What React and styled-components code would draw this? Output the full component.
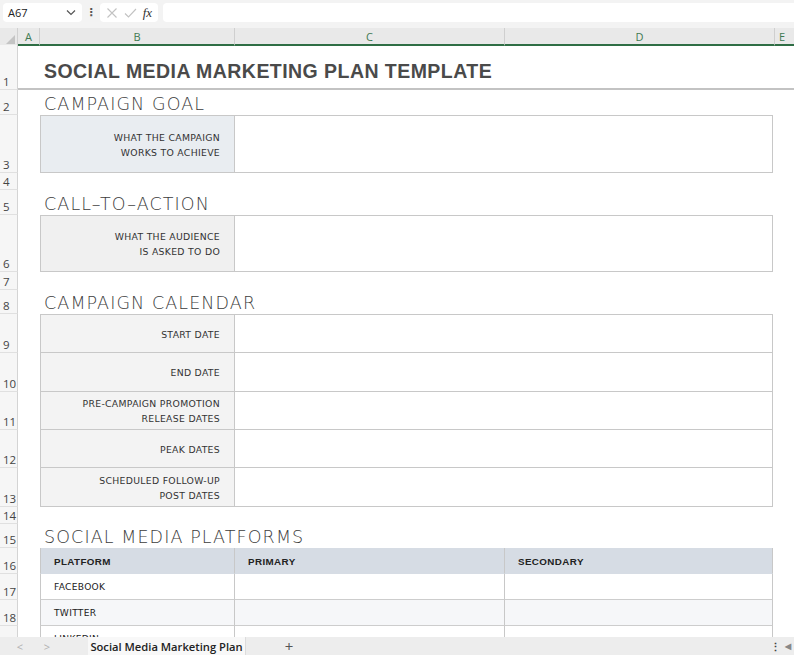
import React from "react";
import styled, { createGlobalStyle } from "styled-components";

const COLS = "18px 22px 195px 270px 270px 1fr";

const GlobalStyle = createGlobalStyle`
  html, body {
    margin: 0;
    padding: 0;
    background: #fff;
  }
  body {
    font-family: "DejaVu Sans", sans-serif;
  }
`;

const Window = styled.div`
  width: 794px;
  height: 655px;
  display: flex;
  flex-direction: column;
  overflow: hidden;
  background: #fff;
`;

const TopBar = styled.div`
  height: 28px;
  flex-shrink: 0;
  background: #f3f3f3;
  display: flex;
  align-items: flex-start;
  padding-top: 3px;
  box-sizing: border-box;
`;

const NameBox = styled.div`
  margin-left: 3px;
  width: 79px;
  height: 19px;
  background: #fff;
  border-radius: 4px;
  display: flex;
  align-items: center;
  justify-content: space-between;
  padding: 0 6px 0 5px;
  box-sizing: border-box;
  font-family: "Open Sans", sans-serif;
  font-size: 11px;
  color: #222;
`;

const Dots = styled.div`
  width: 18px;
  text-align: center;
  font-family: "DejaVu Sans", sans-serif;
  font-size: 11px;
  font-weight: bold;
  color: #555;
  line-height: 19px;
`;

const FxBox = styled.div`
  width: 58px;
  height: 19px;
  background: #fff;
  border-radius: 4px;
  display: flex;
  align-items: center;
  justify-content: space-around;
  padding: 0 3px;
  box-sizing: border-box;
`;

const Fx = styled.span`
  font-family: "Liberation Serif", serif;
  font-style: italic;
  font-size: 13px;
  color: #333;
`;

const Formula = styled.div`
  margin-left: 5px;
  flex: 1;
  height: 19px;
  background: #fff;
  border-radius: 4px 0 0 4px;
`;

const ColHeader = styled.div`
  height: 17px;
  flex-shrink: 0;
  display: grid;
  grid-template-columns: ${COLS};
  background: #e9e9e9;
`;

const Corner = styled.div`
  border-right: 1px solid #d0d0d0;
  position: relative;
  &::after {
    content: "";
    position: absolute;
    right: 2px;
    bottom: 2px;
    border-left: 9px solid transparent;
    border-bottom: 9px solid #c4c4c4;
  }
`;

const ColLetter = styled.div`
  border-right: 1px solid #cfcfcf;
  border-bottom: 2px solid #2f6e45;
  font-family: "Open Sans", sans-serif;
  font-size: 11px;
  color: #3f7a52;
  display: flex;
  align-items: center;
  justify-content: center;
  padding-top: 1px;
  box-sizing: border-box;
  &:last-child {
    border-right: none;
    justify-content: flex-start;
    padding-left: 4px;
  }
`;

const Sheet = styled.div`
  flex: 1;
  overflow: hidden;
  display: flex;
  flex-direction: column;
`;

const Row = styled.div`
  height: ${(p) => p.$h}px;
  flex-shrink: 0;
  display: grid;
  grid-template-columns: ${COLS};
`;

const RowNum = styled.div`
  grid-column: 1;
  background: #f6f6f6;
  border-right: 1px solid #d4d4d4;
  border-bottom: 1px solid #e0e0e0;
  font-family: "Open Sans", sans-serif;
  font-size: 11.5px;
  color: #444;
  display: flex;
  align-items: flex-end;
  padding: 0 0 1px 3px;
  box-sizing: border-box;
  line-height: 13px;
`;

const Title = styled.div`
  grid-column: 2 / -1;
  border-bottom: 2px solid #c3c3c3;
  display: flex;
  align-items: center;
  padding: 10px 0 0 26px;
  box-sizing: border-box;
  font-family: "Liberation Sans", sans-serif;
  font-weight: bold;
  font-size: 19.5px;
  letter-spacing: 0.45px;
  color: #4a4a4a;
`;

const Heading = styled.div`
  grid-column: 3 / -1;
  display: flex;
  align-items: flex-end;
  padding: 0 0 1px 4px;
  font-family: "DejaVu Sans", sans-serif;
  font-weight: 200;
  font-size: 17.5px;
  letter-spacing: 1.1px;
  color: #3c3c3c;
  line-height: 19px;
`;

const Label = styled.div`
  grid-column: 3;
  background: ${(p) => p.$bg || "#f2f2f2"};
  border: 1px solid #c8c8c8;
  border-top: ${(p) => (p.$first ? "1px solid #c8c8c8" : "none")};
  display: flex;
  align-items: center;
  justify-content: flex-end;
  text-align: right;
  padding: 1px 14px 0 0;
  box-sizing: border-box;
  font-family: "DejaVu Sans", sans-serif;
  font-size: 9.3px;
  letter-spacing: 0.3px;
  line-height: 15px;
  color: #333;
`;

const Value = styled.div`
  grid-column: 4 / 6;
  margin-right: 2px;
  border-right: 1px solid #c8c8c8;
  border-bottom: 1px solid #c8c8c8;
  border-top: ${(p) => (p.$first ? "1px solid #c8c8c8" : "none")};
  background: #fff;
`;

const PCell = styled.div`
  grid-column: ${(p) => p.$col};
  background: ${(p) => (p.$head ? "#d6dce4" : p.$alt ? "#f6f7f9" : "#fff")};
  border-right: 1px solid #c8c8c8;
  border-left: ${(p) => (p.$col === 3 ? "1px solid #c8c8c8" : "none")};
  border-bottom: 1px solid ${(p) => (p.$head ? "#d6dce4" : "#cdcdcd")};
  margin-right: ${(p) => (p.$col === 5 ? "2px" : "0")};
  display: flex;
  align-items: center;
  padding: 1px 0 0 13px;
  box-sizing: border-box;
  font-family: ${(p) => (p.$head ? '"Liberation Sans", sans-serif' : '"DejaVu Sans", sans-serif')};
  font-weight: ${(p) => (p.$head ? "bold" : "normal")};
  font-size: ${(p) => (p.$head ? "9.8px" : "9.1px")};
  letter-spacing: ${(p) => (p.$head ? "0.4px" : "0.3px")};
  color: #222;
`;

const TabBar = styled.div`
  height: 18px;
  flex-shrink: 0;
  background: #ededed;
  display: flex;
  align-items: stretch;
  font-family: "Open Sans", sans-serif;
  line-height: 1;
`;

const Arrow = styled.div`
  width: ${(p) => p.$w}px;
  display: flex;
  align-items: center;
  justify-content: center;
  color: #b0b0b0;
  font-size: 11px;
`;

const Tab = styled.div`
  width: 158px;
  margin-left: ${(p) => p.$ml}px;
  background: #f8f8f8;
  border-right: 1px solid #dcdcdc;
  display: flex;
  align-items: center;
  justify-content: center;
  font-size: 11.2px;
  font-weight: 600;
  color: #222;
  padding-top: 1px;
  box-sizing: border-box;
`;

const Plus = styled.div`
  width: 86px;
  display: flex;
  align-items: center;
  justify-content: center;
  font-size: 15px;
  color: #555;
`;

const Spacer = styled.div`
  flex: 1;
`;

const TailIcon = styled.div`
  width: ${(p) => p.$w}px;
  display: flex;
  align-items: center;
  justify-content: center;
  font-size: ${(p) => p.$fs}px;
  font-weight: bold;
  color: ${(p) => p.$c};
`;

const Chevron = () => (
  <svg width="10" height="7" viewBox="0 0 10 7">
    <path d="M1 1.5 L5 5.5 L9 1.5" fill="none" stroke="#555" strokeWidth="1.2" />
  </svg>
);

const Cross = () => (
  <svg width="12" height="12" viewBox="0 0 12 12">
    <path d="M1.5 1.5 L10.5 10.5 M10.5 1.5 L1.5 10.5" stroke="#c2c2c2" strokeWidth="1.1" />
  </svg>
);

const Check = () => (
  <svg width="13" height="12" viewBox="0 0 13 12">
    <path d="M1 6.5 L4.5 10 L12 2" fill="none" stroke="#c2c2c2" strokeWidth="1.1" />
  </svg>
);

const Spacer1 = ({ h, n }) => (
  <Row $h={h}>
    <RowNum>{n}</RowNum>
  </Row>
);

const calendar = [
  ["START DATE"],
  ["END DATE"],
  ["PRE-CAMPAIGN PROMOTION", "RELEASE DATES"],
  ["PEAK DATES"],
  ["SCHEDULED FOLLOW-UP", "POST DATES"],
];
const calHeights = [39, 39, 38, 38, 39];

const platforms = ["FACEBOOK", "TWITTER", "LINKEDIN"];

const Lines = ({ lines }) =>
  lines.map((l, i) => (
    <React.Fragment key={i}>
      {i > 0 && <br />}
      {l}
    </React.Fragment>
  ));

export default function App() {
  return (
    <Window>
      <GlobalStyle />
      <TopBar>
        <NameBox>
          A67
          <Chevron />
        </NameBox>
        <Dots>⋮</Dots>
        <FxBox>
          <Cross />
          <Check />
          <Fx>fx</Fx>
        </FxBox>
        <Formula />
      </TopBar>

      <ColHeader>
        <Corner />
        <ColLetter>A</ColLetter>
        <ColLetter>B</ColLetter>
        <ColLetter>C</ColLetter>
        <ColLetter>D</ColLetter>
        <ColLetter>E</ColLetter>
      </ColHeader>

      <Sheet>
        <Row $h={45}>
          <RowNum>1</RowNum>
          <Title>SOCIAL MEDIA MARKETING PLAN TEMPLATE</Title>
        </Row>

        <Row $h={25}>
          <RowNum>2</RowNum>
          <Heading>CAMPAIGN GOAL</Heading>
        </Row>
        <Row $h={58}>
          <RowNum>3</RowNum>
          <Label $first $bg="#e9edf1">
            <div>
              <Lines lines={["WHAT THE CAMPAIGN", "WORKS TO ACHIEVE"]} />
            </div>
          </Label>
          <Value $first />
        </Row>
        <Spacer1 h={17} n={4} />

        <Row $h={25}>
          <RowNum>5</RowNum>
          <Heading>CALL–TO–ACTION</Heading>
        </Row>
        <Row $h={57}>
          <RowNum>6</RowNum>
          <Label $first $bg="#f0f0f0">
            <div>
              <Lines lines={["WHAT THE AUDIENCE", "IS ASKED TO DO"]} />
            </div>
          </Label>
          <Value $first />
        </Row>
        <Spacer1 h={18} n={7} />

        <Row $h={24}>
          <RowNum>8</RowNum>
          <Heading>CAMPAIGN CALENDAR</Heading>
        </Row>
        {calendar.map((lines, i) => (
          <Row $h={calHeights[i]} key={i}>
            <RowNum>{9 + i}</RowNum>
            <Label $first={i === 0} $bg="#f3f3f3">
              <div>
                <Lines lines={lines} />
              </div>
            </Label>
            <Value $first={i === 0} />
          </Row>
        ))}
        <Spacer1 h={17} n={14} />

        <Row $h={24}>
          <RowNum>15</RowNum>
          <Heading>SOCIAL MEDIA PLATFORMS</Heading>
        </Row>
        <Row $h={26}>
          <RowNum>16</RowNum>
          <PCell $col={3} $head>PLATFORM</PCell>
          <PCell $col={4} $head>PRIMARY</PCell>
          <PCell $col={5} $head>SECONDARY</PCell>
        </Row>
        {platforms.map((p, i) => (
          <Row $h={26} key={p}>
            <RowNum>{17 + i}</RowNum>
            <PCell $col={3} $alt={i % 2 === 1}>{p}</PCell>
            <PCell $col={4} $alt={i % 2 === 1} />
            <PCell $col={5} $alt={i % 2 === 1} />
          </Row>
        ))}
      </Sheet>

      <TabBar>
        <Arrow $w={40}>&lt;</Arrow>
        <Arrow $w={14}>&gt;</Arrow>
        <Tab $ml={34}>Social Media Marketing Plan</Tab>
        <Plus>+</Plus>
        <Spacer />
        <TailIcon $w={14} $fs={11} $c="#444">⋮</TailIcon>
        <TailIcon $w={12} $fs={8} $c="#888">◀</TailIcon>
      </TabBar>
    </Window>
  );
}
